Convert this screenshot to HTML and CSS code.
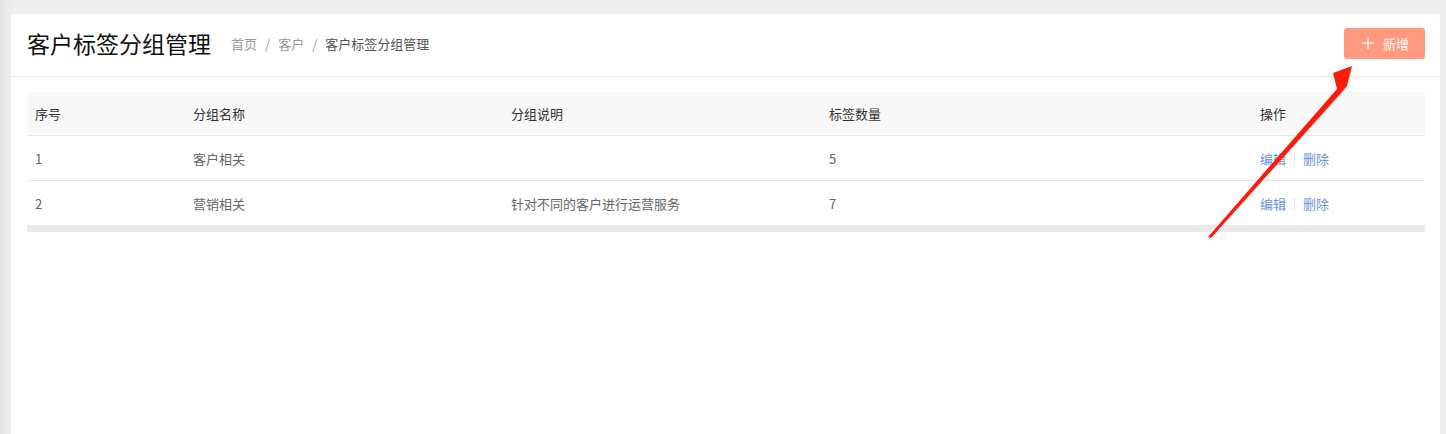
FILE: index.html
```html
<!DOCTYPE html>
<html lang="zh-CN">
<head>
  <meta charset="UTF-8" />
  <title>客户标签分组管理</title>
  <link rel="stylesheet" href="styles.css">
</head>
<body>
  <div class="panel">
    <div class="page-head">
      <h1>客户标签分组管理</h1>
      <div class="crumbs">
        <span>首页</span><i>/</i><span>客户</span><i>/</i><span class="current">客户标签分组管理</span>
      </div>
      <button class="btn-add">
        <svg class="plus" width="12" height="12" viewBox="0 0 12 12"><path d="M6 0v12M0 6h12" stroke="#fff" stroke-width="1.2"/></svg>
        新增
      </button>
    </div>

    <div class="table-wrap">
      <table>
        <colgroup>
          <col style="width:158px"><col style="width:318px"><col style="width:318px"><col style="width:431px"><col>
        </colgroup>
        <thead>
          <tr><th>序号</th><th>分组名称</th><th>分组说明</th><th>标签数量</th><th>操作</th></tr>
        </thead>
        <tbody>
          <tr>
            <td>1</td><td>客户相关</td><td></td><td>5</td>
            <td><a>编辑</a><span class="sep"></span><a>删除</a></td>
          </tr>
          <tr>
            <td>2</td><td>营销相关</td><td>针对不同的客户进行运营服务</td><td>7</td>
            <td><a>编辑</a><span class="sep"></span><a>删除</a></td>
          </tr>
        </tbody>
      </table>
      <div class="scrollbar"></div>
    </div>

    <!-- annotation arrow -->
    <svg class="arrow" width="1446" height="434" viewBox="0 0 1446 434">
      <polygon points="1208,237 1337,89 1333,73 1352,66 1347,86 1342,92 1211,238" fill="#ff1a0a"/>
    </svg>
  </div>
</body>
</html>
```

FILE: styles.css
```css
html, body {
  margin: 0;
  height: 100%;
}
body {
  background: linear-gradient(to right, #e3e3e3 0, #eeeeee 11px, #eeeeee 100%);
  padding: 14px 6px 0 11px;
  box-sizing: border-box;
  font-family: "Noto Sans CJK SC", "Noto Sans", sans-serif;
  font-size: 13px;
  color: #666;
  overflow: hidden;
}
.panel {
  background: #fff;
  height: 100%;
}
.page-head {
  display: flex;
  align-items: center;
  height: 58px;
  padding: 0 15px 4px 16px;
  border-bottom: 1px solid #ebebeb;
}
h1 {
  margin: 0;
  font-size: 23px;
  font-weight: normal;
  color: #111;
}
.crumbs {
  margin-left: 20px;
  margin-top: 1px;
  color: #999;
  flex: 1;
}
.crumbs i {
  font-style: normal;
  margin: 0 8px;
}
.crumbs .current {
  color: #555;
}
.btn-add {
  width: 81px;
  height: 31px;
  border: none;
  border-radius: 3px;
  background: #ff9a80;
  color: #fff;
  font-family: inherit;
  font-size: 13px;
  display: flex;
  align-items: center;
  justify-content: center;
  padding: 0 0 0 2px;
}
.plus {
  margin-right: 9px;
}
.table-wrap {
  padding: 15px 15px 0 16px;
}
table {
  width: 100%;
  border-collapse: collapse;
  table-layout: fixed;
}
th, td {
  text-align: left;
  padding: 0 8px;
  height: 44px;
  border-bottom: 1px solid #e6e6e6;
}
th {
  background: #f8f8f8;
  font-weight: normal;
  color: #333;
  height: 43px;
}
tbody tr:last-child td {
  border-bottom: none;
}
td a {
  color: #6a94e0;
}
.sep {
  display: inline-block;
  width: 1px;
  height: 12px;
  background: #e3e3e3;
  margin: 0 8px;
  vertical-align: -1px;
}
.scrollbar {
  height: 7px;
  background: #ebebeb;
}
.arrow {
  position: absolute;
  left: 0;
  top: 0;
  pointer-events: none;
}
```
